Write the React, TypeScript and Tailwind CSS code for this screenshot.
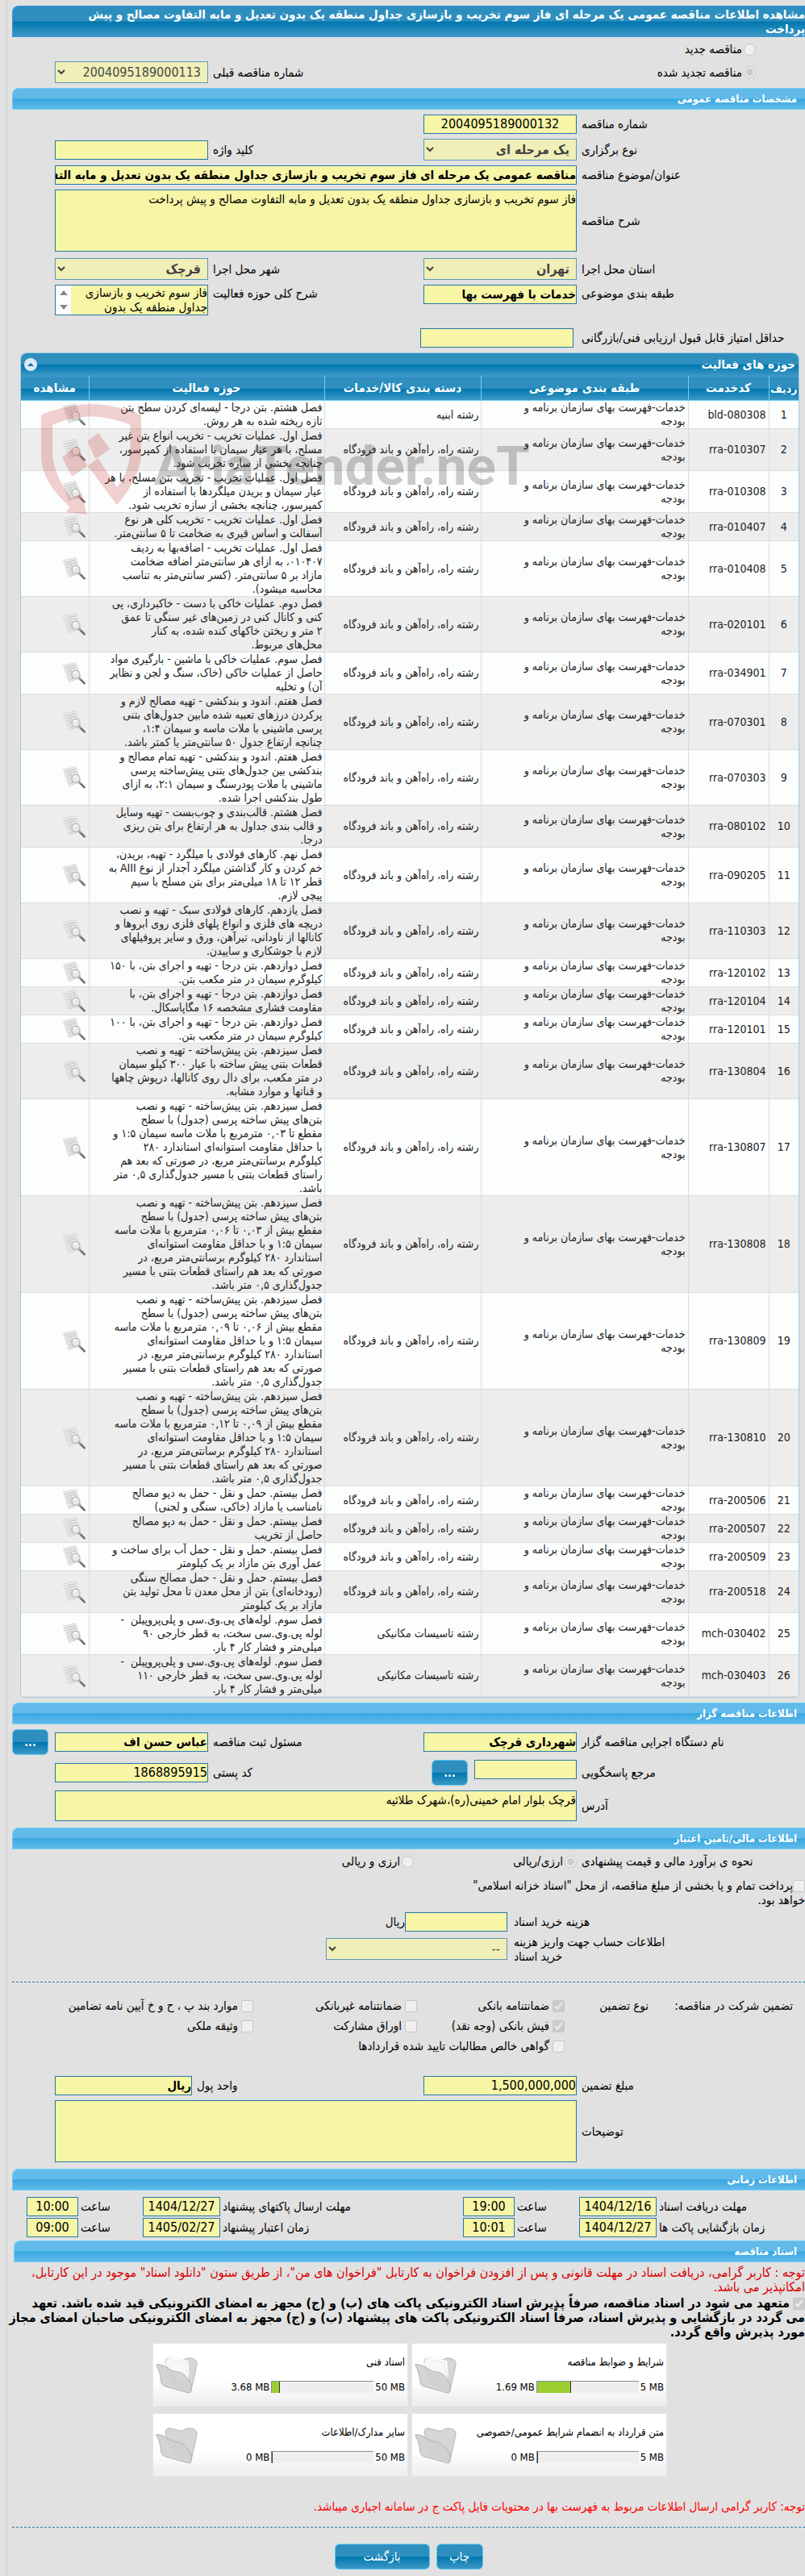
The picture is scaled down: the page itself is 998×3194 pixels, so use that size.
import { type ReactNode } from 'react';
import clsx from 'clsx';

const ROAD = 'رشته راه، راه‌آهن و باند فرودگاه';
const MECH = 'رشته تاسیسات مکانیکی';

type Activity = { code: string; category: string; lines: string[] };

const activities: Activity[] = [
  { code: 'bld-080308', category: 'رشته ابنیه', lines: ['فصل هشتم. بتن درجا - لیسه‌ای کردن سطح بتن', 'تازه ریخته شده به هر روش.'] },
  { code: 'rra-010307', category: ROAD, lines: ['فصل اول. عملیات تخریب - تخریب انواع بتن غیر', 'مسلح، با هر عیار سیمان با استفاده از کمپرسور،', 'چنانچه بخشی از سازه تخریب شود.'] },
  { code: 'rra-010308', category: ROAD, lines: ['فصل اول. عملیات تخریب - تخریب بتن مسلح، با هر', 'عیار سیمان و بریدن میلگردها با استفاده از', 'کمپرسور، چنانچه بخشی از سازه تخریب شود.'] },
  { code: 'rra-010407', category: ROAD, lines: ['فصل اول. عملیات تخریب - تخریب کلی هر نوع', 'آسفالت و اساس قیری به ضخامت تا ۵ سانتی‌متر.'] },
  { code: 'rra-010408', category: ROAD, lines: ['فصل اول. عملیات تخریب - اضافه‌بها به ردیف', '۰۱۰۴۰۷، به ازای هر سانتی‌متر اضافه ضخامت', 'مازاد بر ۵ سانتی‌متر. (کسر سانتی‌متر به تناسب', 'محاسبه میشود).'] },
  { code: 'rra-020101', category: ROAD, lines: ['فصل دوم. عملیات خاکی با دست - خاکبرداری، پی', 'کنی و کانال کنی در زمین‌های غیر سنگی تا عمق', '۲ متر و ریختن خاکهای کنده شده، به کنار', 'محل‌های مربوط.'] },
  { code: 'rra-034901', category: ROAD, lines: ['فصل سوم. عملیات خاکی با ماشین - بارگیری مواد', 'حاصل از عملیات خاکی (خاک، سنگ و لجن و نظایر', 'آن) و تخلیه'] },
  { code: 'rra-070301', category: ROAD, lines: ['فصل هفتم. اندود و بندکشی - تهیه مصالح لازم و', 'پرکردن درزهای تعبیه شده مابین جدول‌های بتنی', 'پرسی ماشینی با ملات ماسه و سیمان ۱:۴،', 'چنانچه ارتفاع جدول ۵۰ سانتی‌متر یا کمتر باشد.'] },
  { code: 'rra-070303', category: ROAD, lines: ['فصل هفتم. اندود و بندکشی - تهیه تمام مصالح و', 'بندکشی بین جدول‌های بتنی پیش‌ساخته پرسی', 'ماشینی با ملات پودرسنگ و سیمان ۲:۱، به ازای', 'طول بندکشی اجرا شده.'] },
  { code: 'rra-080102', category: ROAD, lines: ['فصل هشتم. قالب‌بندی و چوب‌بست - تهیه وسایل', 'و قالب بندی جداول به هر ارتفاع برای بتن ریزی', 'درجا.'] },
  { code: 'rra-090205', category: ROAD, lines: ['فصل نهم. کارهای فولادی با میلگرد - تهیه، بریدن،', 'خم کردن و کار گذاشتن میلگرد آجدار از نوع AIII به', 'قطر ۱۲ تا ۱۸ میلی‌متر برای بتن مسلح با سیم', 'پیچی لازم.'] },
  { code: 'rra-110303', category: ROAD, lines: ['فصل یازدهم. کارهای فولادی سبک - تهیه و نصب', 'دریچه های فلزی و انواع پلهای فلزی روی ابروها و', 'کانالها از ناودانی، تیرآهن، ورق و سایر پروفیلهای', 'لازم با جوشکاری و ساییدن.'] },
  { code: 'rra-120102', category: ROAD, lines: ['فصل دوازدهم. بتن درجا - تهیه و اجرای بتن، با ۱۵۰', 'کیلوگرم سیمان در متر مکعب بتن.'] },
  { code: 'rra-120104', category: ROAD, lines: ['فصل دوازدهم. بتن درجا - تهیه و اجرای بتن، با', 'مقاومت فشاری مشخصه ۱۶ مگاپاسکال.'] },
  { code: 'rra-120101', category: ROAD, lines: ['فصل دوازدهم. بتن درجا - تهیه و اجرای بتن، با ۱۰۰', 'کیلوگرم سیمان در متر مکعب بتن.'] },
  { code: 'rra-130804', category: ROAD, lines: ['فصل سیزدهم. بتن پیش‌ساخته - تهیه و نصب', 'قطعات بتنی پیش ساخته با عیار ۳۰۰ کیلو سیمان', 'در متر مکعب، برای دال روی کانالها، درپوش چاهها', 'و قناتها و موارد مشابه.'] },
  { code: 'rra-130807', category: ROAD, lines: ['فصل سیزدهم. بتن پیش‌ساخته - تهیه و نصب', 'بتن‌های پیش ساخته پرسی (جدول) با سطح', 'مقطع تا ۰,۰۳ مترمربع با ملات ماسه سیمان ۱:۵ و', 'با حداقل مقاومت استوانه‌ای استاندارد ۲۸۰', 'کیلوگرم برسانتی‌متر مربع، در صورتی که بعد هم', 'راستای قطعات بتنی با مسیر جدول‌گذاری ۰,۵ متر', 'باشد.'] },
  { code: 'rra-130808', category: ROAD, lines: ['فصل سیزدهم. بتن پیش‌ساخته - تهیه و نصب', 'بتن‌های پیش ساخته پرسی (جدول) با سطح', 'مقطع بیش از ۰,۰۳ تا ۰,۰۶ مترمربع با ملات ماسه', 'سیمان ۱:۵ و با حداقل مقاومت استوانه‌ای', 'استاندارد ۲۸۰ کیلوگرم برسانتی‌متر مربع، در', 'صورتی که بعد هم راستای قطعات بتنی با مسیر', 'جدول‌گذاری ۰,۵ متر باشد.'] },
  { code: 'rra-130809', category: ROAD, lines: ['فصل سیزدهم. بتن پیش‌ساخته - تهیه و نصب', 'بتن‌های پیش ساخته پرسی (جدول) با سطح', 'مقطع بیش از ۰,۰۶ تا ۰,۰۹ مترمربع با ملات ماسه', 'سیمان ۱:۵ و با حداقل مقاومت استوانه‌ای', 'استاندارد ۲۸۰ کیلوگرم برسانتی‌متر مربع، در', 'صورتی که بعد هم راستای قطعات بتنی با مسیر', 'جدول‌گذاری ۰,۵ متر باشد.'] },
  { code: 'rra-130810', category: ROAD, lines: ['فصل سیزدهم. بتن پیش‌ساخته - تهیه و نصب', 'بتن‌های پیش ساخته پرسی (جدول) با سطح', 'مقطع بیش از ۰,۰۹ تا ۰,۱۲ مترمربع با ملات ماسه', 'سیمان ۱:۵ و با حداقل مقاومت استوانه‌ای', 'استاندارد ۲۸۰ کیلوگرم برسانتی‌متر مربع، در', 'صورتی که بعد هم راستای قطعات بتنی با مسیر', 'جدول‌گذاری ۰,۵ متر باشد.'] },
  { code: 'rra-200506', category: ROAD, lines: ['فصل بیستم. حمل و نقل - حمل به دپو مصالح', 'نامناسب یا مازاد (خاکی، سنگی و لجنی)'] },
  { code: 'rra-200507', category: ROAD, lines: ['فصل بیستم. حمل و نقل - حمل به دپو مصالح', 'حاصل از تخریب'] },
  { code: 'rra-200509', category: ROAD, lines: ['فصل بیستم. حمل و نقل - حمل آب برای ساخت و', 'عمل آوری بتن مازاد بر یک کیلومتر'] },
  { code: 'rra-200518', category: ROAD, lines: ['فصل بیستم. حمل و نقل - حمل مصالح سنگی', '(رودخانه‌ای) بتن از محل معدن تا محل تولید بتن', 'مازاد بر یک کیلومتر'] },
  { code: 'mch-030402', category: MECH, lines: ['فصل سوم. لوله‌های پی.وی.سی و پلی‌پروپیلن  -', 'لوله پی.وی.سی سخت، به قطر خارجی ۹۰', 'میلی‌متر و فشار کار ۴ بار.'] },
  { code: 'mch-030403', category: MECH, lines: ['فصل سوم. لوله‌های پی.وی.سی و پلی‌پروپیلن  -', 'لوله پی.وی.سی سخت، به قطر خارجی ۱۱۰', 'میلی‌متر و فشار کار ۴ بار.'] },
];

const fieldClass = 'block w-full rounded-none border border-[#2478ac] bg-[#f7f5a6] p-0 text-black outline-none';
const darkBar = 'bg-[linear-gradient(to_bottom,#2e8fbf_0%,#2e8fbf_49%,#0077ae_51%,#3d98c6_100%)]';
const rowGrid = 'grid grid-cols-[283fr_190fr_267fr_190fr_53fr]';

function SectionHeader({ children, className }: { children: ReactNode; className?: string }) {
  return (
    <h2
      className={clsx(
        'flex h-[27px] items-center rounded-tl-lg border-y border-l border-[#6fd0f5] bg-[linear-gradient(to_bottom,#62baea_0%,#62baea_46%,#38a7e0_52%,#62baea_100%)] pr-2.5 text-[13px] font-bold text-white',
        className,
      )}
    >
      {children}
    </h2>
  );
}

function Label({ htmlFor, children, className }: { htmlFor: string; children: ReactNode; className?: string }) {
  return (
    <label htmlFor={htmlFor} className={clsx('self-center pl-1.5 text-left whitespace-nowrap', className)}>
      {children}
    </label>
  );
}

type FieldProps = { id: string; value?: string; bold?: boolean; className?: string };

function TextField({ id, value = '', bold = false, className }: FieldProps) {
  return (
    <input
      id={id}
      type="text"
      readOnly
      value={value}
      className={clsx(fieldClass, 'h-6', bold ? 'text-[15px] font-bold' : 'text-base', className)}
    />
  );
}

function SelectField({ id, value, bold = false, className }: FieldProps) {
  return (
    <select id={id} disabled className={clsx(fieldClass, 'h-[27px] px-1 text-base opacity-70', bold && 'font-bold', className)}>
      <option>{value}</option>
    </select>
  );
}

function Check({ id, label, checked = false }: { id: string; label: string; checked?: boolean }) {
  return (
    <div className="flex items-center gap-1">
      <input id={id} type="checkbox" disabled defaultChecked={checked} className="h-[15px] w-[15px] shrink-0" />
      <label htmlFor={id} className="whitespace-nowrap">{label}</label>
    </div>
  );
}

function Radio({ id, name, label, checked = false }: { id: string; name: string; label: string; checked?: boolean }) {
  return (
    <div className="flex items-center gap-0.5">
      <input id={id} name={name} type="radio" disabled defaultChecked={checked} className="h-[15px] w-[15px] shrink-0" />
      <label htmlFor={id} className="whitespace-nowrap">{label}</label>
    </div>
  );
}

function MoreButton() {
  return (
    <button type="button" className={clsx(darkBar, 'h-8 w-[45px] shrink-0 rounded-md border border-[#5fc8f5] text-sm font-bold text-white')}>
      ...
    </button>
  );
}

function PreviewIcon() {
  return (
    <svg viewBox="0 0 84 84" className="block h-7 w-7" aria-hidden="true">
      <path d="M2 12 48 2 66 58 22 74Z" fill="#ececec" stroke="#c9c9c9" strokeWidth="2" />
      <path d="M9 20 46 11M12 29 49 20M15 38 38 32M18 47 36 42M21 56 38 51M24 65 42 59" stroke="#bdbdbd" strokeWidth="3" />
      <path d="M25 12 38 68M40 8 48 32" stroke="#d4d4d4" strokeWidth="4" />
      <circle cx="48" cy="46" r="15" fill="#e9e9e9" fillOpacity="0.9" stroke="#ababab" strokeWidth="3" />
      <path d="M40 42Q43 36 51 36" stroke="#fff" strokeWidth="4" fill="none" />
      <path d="M61 60 80 79" stroke="#707070" strokeWidth="8" strokeLinecap="round" />
      <path d="M58 56 66 64" stroke="#b5b5b5" strokeWidth="6" />
    </svg>
  );
}

function Watermark() {
  return (
    <svg viewBox="75 21 1920 600" className="pointer-events-none absolute top-0 left-0 h-[200px] w-[640px]" aria-hidden="true">
      <g fill="#c62828" fillOpacity="0.22">
        <path d="M150 250Q240 212 335 210Q430 212 522 250V400Q515 490 432 585L323 440L362 412L432 520Q478 460 482 390V288Q410 258 335 256Q260 258 192 288V400Q200 480 264 562L300 540L320 620L242 612L256 592Q150 500 150 400Z" />
        <path d="M228 408 284 364 322 440 265 480Z" />
        <path d="M322 348 362 318 407 378 352 414Z" />
      </g>
      <text
        direction="ltr"
        x="570"
        y="510"
        fontFamily="Roboto, sans-serif"
        fontWeight="700"
        fontSize="202"
        fill="#000"
        fillOpacity="0.2"
      >
        AriaTender.neT
      </text>
    </svg>
  );
}

function ActivityTable() {
  return (
    <section className="relative mt-1.5 mr-[7px] ml-2.5 overflow-hidden rounded-t-lg rounded-b-md border border-[#a3c9e4] bg-[#fcfefe]">
      <div className={clsx(darkBar, 'flex h-7 items-center justify-between px-1 text-[15px] font-bold text-white')}>
        <h3>حوزه های فعالیت</h3>
        <button type="button" aria-label="بستن" className="flex h-4 w-4 items-center justify-center rounded-full bg-[#dbe8f8]">
          <svg viewBox="0 0 8 4" className="h-1 w-2"><path d="M0 4 4 0 8 4Z" fill="#0d6ea6" /></svg>
        </button>
      </div>
      <table className="w-full table-fixed border-collapse text-sm leading-[17px] text-[#222]">
        <colgroup>
          <col className="w-[37px]" />
          <col className="w-[100px]" />
          <col className="w-[257px]" />
          <col className="w-[194px]" />
          <col />
          <col className="w-[84px]" />
        </colgroup>
        <thead>
          <tr className={clsx(darkBar, 'h-[30px] border-t border-b border-t-[#3b93d8] border-b-[#6fd0f5] text-[15px] text-white')}>
            <th className="border-l border-[#6fd0f5] p-0 text-sm whitespace-nowrap">ردیف</th>
            <th className="border-l border-[#6fd0f5]">کدخدمت</th>
            <th className="border-l border-[#6fd0f5]">طبقه بندی موضوعی</th>
            <th className="border-l border-[#6fd0f5]">دسته بندی کالا/خدمات</th>
            <th className="border-l border-[#6fd0f5]">حوزه فعالیت</th>
            <th>مشاهده</th>
          </tr>
        </thead>
        <tbody>
          {activities.map((a, i) => (
            <tr key={a.code} className="border-b border-[#dcdcdc] odd:bg-[#fcfefe] even:bg-[#ededed]">
              <td className="border-l border-[#dcdcdc] p-0 text-center">{i + 1}</td>
              <td className="border-l border-[#dcdcdc] p-0 pr-[3px]"><bdi>{a.code}</bdi></td>
              <td className="border-l border-[#dcdcdc] p-0 pr-[3px] whitespace-pre">{'خدمات-فهرست بهای سازمان برنامه و\nبودجه'}</td>
              <td className="border-l border-[#dcdcdc] p-0 pr-0.5 whitespace-nowrap">{a.category}</td>
              <td className="border-l border-[#dcdcdc] p-0 pr-0.5 whitespace-pre">{a.lines.join('\n')}</td>
              <td className="p-0 pr-1"><PreviewIcon /></td>
            </tr>
          ))}
        </tbody>
      </table>
      <Watermark />
    </section>
  );
}

function FolderIcon({ filled }: { filled: boolean }) {
  return (
    <svg viewBox="0 0 160 140" className="h-[47px] w-[53px] shrink-0" aria-hidden="true">
      <path d="M36 20Q38 4 50 4L92 14Q102 16 110 8Q120 2 138 6Q156 12 154 30L132 128 60 100Z" fill="#d6d6d6" stroke="#b5b5b5" strokeWidth="3" />
      {filled && (
        <>
          <path d="M36 18 50 0 122 14 126 70 90 84Z" fill="#fff" stroke="#e2e2e2" strokeWidth="2" />
          <path d="M34 28 44 8 112 20 124 84 90 84Z" fill="#f7f7f7" stroke="#dcdcdc" strokeWidth="2" />
        </>
      )}
      <path d="M2 30Q6 26 12 28Q34 32 50 46Q66 56 92 58Q112 64 134 104L132 130Q130 138 120 134L34 110Q22 106 20 92Q18 56 2 30Z" fill="#d0d0d0" fillOpacity="0.92" stroke="#b0b0b0" strokeWidth="3" />
    </svg>
  );
}

type Doc = { title: string; total: number; used: number };

const docs: Doc[] = [
  { title: 'شرایط و ضوابط مناقصه', total: 5, used: 1.69 },
  { title: 'اسناد فنی', total: 50, used: 3.68 },
  { title: 'متن قرارداد به انضمام شرایط عمومی/خصوصی', total: 5, used: 0 },
  { title: 'سایر مدارک/اطلاعات', total: 50, used: 0 },
];

function DocCard({ doc }: { doc: Doc }) {
  return (
    <div className="relative flex h-[79px] items-start border border-[#e6e6e6] bg-linear-to-b from-white from-60% to-[#ededed] px-[3px] text-[13px]">
      <div className="min-w-0 flex-1">
        <div className="mt-3.5 h-[17px] leading-[17px] whitespace-nowrap">{doc.title}</div>
        <div className="mt-[15px] flex h-[15px] items-center gap-0.5">
          <bdi className="whitespace-nowrap" dir="ltr">{doc.total} MB</bdi>
          <div dir="ltr" className="h-[15px] w-[127px] border-t border-l border-[#8d8d8d] bg-[#eee]">
            <div className="h-full border-r border-[#333] bg-[#9acd32]" style={{ width: `${(doc.used / doc.total) * 100}%` }} />
          </div>
          <bdi className="whitespace-nowrap" dir="ltr">{doc.used} MB</bdi>
        </div>
      </div>
      <div className="absolute top-4 left-[3px]">
        <FolderIcon filled={doc.used > 0} />
      </div>
    </div>
  );
}

type TimePair = { id: string; label: string; date: string; time: string };

const deadlines: TimePair[][] = [
  [
    { id: 'docs-due', label: 'مهلت دریافت اسناد', date: '1404/12/16', time: '19:00' },
    { id: 'offer-due', label: 'مهلت ارسال پاکتهای پیشنهاد', date: '1404/12/27', time: '10:00' },
  ],
  [
    { id: 'opening', label: 'زمان بازگشایی پاکت ها', date: '1404/12/27', time: '10:01' },
    { id: 'validity', label: 'زمان اعتبار پیشنهاد', date: '1405/02/27', time: '09:00' },
  ],
];

export default function App() {
  return (
    <div dir="rtl" lang="fa" className="min-h-screen bg-[#e1e1e1] pl-2 font-['DejaVu_Sans_Condensed','DejaVu_Sans',sans-serif] text-[15px] leading-[18px] text-black">
      <main className="border-l border-dotted border-[#bbb] pt-[7px] pb-[7px] pl-1.5">
        <h1 className={clsx(darkBar, 'rounded-tl-lg border-y border-l border-[#3b93d8] pt-px pl-10 font-bold text-white')}>
          مشاهده اطلاعات مناقصه عمومی یک مرحله ای فاز سوم تخریب و بازسازی جداول منطقه یک بدون تعدیل و مابه التفاوت مصالح و پیش پرداخت
        </h1>
        <div className="flex h-[30px] items-center pr-[61px]">
          <Radio id="kind-new" name="kind" label="مناقصه جدید" />
        </div>
        <div className={clsx(rowGrid, 'items-center')}>
          <div className="col-span-2 pr-[61px]">
            <Radio id="kind-renewed" name="kind" label="مناقصه تجدید شده" checked />
          </div>
          <Label htmlFor="prev-no">شماره مناقصه قبلی</Label>
          <SelectField id="prev-no" value="2004095189000113" />
        </div>

        <SectionHeader className="mt-1.5">مشخصات مناقصه عمومی</SectionHeader>
        <div className={clsx(rowGrid, 'mt-1.5')}>
          <Label htmlFor="tender-no">شماره مناقصه</Label>
          <TextField id="tender-no" value="2004095189000132" className="text-center" />
        </div>
        <div className={clsx(rowGrid, 'mt-1.5')}>
          <Label htmlFor="type">نوع برگزاری</Label>
          <SelectField id="type" value="یک مرحله ای" bold />
          <Label htmlFor="keyword">کلید واژه</Label>
          <TextField id="keyword" className="self-center" />
        </div>
        <div className={clsx(rowGrid, 'mt-1.5')}>
          <Label htmlFor="subject">عنوان/موضوع مناقصه</Label>
          <TextField
            id="subject"
            value="مناقصه عمومی یک مرحله ای فاز سوم تخریب و بازسازی جداول منطقه یک بدون تعدیل و مابه التفاوت مصالح و پیش پرداخت"
            bold
            className="col-span-3"
          />
        </div>
        <div className={clsx(rowGrid, 'mt-1.5')}>
          <Label htmlFor="desc">شرح مناقصه</Label>
          <textarea
            id="desc"
            readOnly
            className={clsx(fieldClass, 'col-span-3 h-[77px] resize-none pt-0.5')}
            value="فاز سوم تخریب و بازسازی جداول منطقه یک بدون تعدیل و مابه التفاوت مصالح و پیش پرداخت"
          />
        </div>
        <div className={clsx(rowGrid, 'mt-2')}>
          <Label htmlFor="province">استان محل اجرا</Label>
          <SelectField id="province" value="تهران" bold />
          <Label htmlFor="city">شهر محل اجرا</Label>
          <SelectField id="city" value="قرچک" bold />
        </div>
        <div className={clsx(rowGrid, 'mt-1.5 items-start')}>
          <Label htmlFor="class" className="self-start pt-0.5">طبقه بندی موضوعی</Label>
          <TextField id="class" value="خدمات با فهرست بها" bold />
          <Label htmlFor="scope" className="self-start pt-0.5">شرح کلی حوزه فعالیت</Label>
          <div className="flex h-[38px] border border-[#2478ac] bg-[#f7f5a6]">
            <textarea
              id="scope"
              readOnly
              className="h-full min-w-0 flex-1 resize-none overflow-hidden bg-transparent p-0 outline-none"
              value={'فاز سوم تخریب و بازسازی\nجداول منطقه یک بدون'}
            />
            <div className="flex w-[19px] shrink-0 flex-col items-center justify-around bg-[#fcfcfc]" aria-hidden="true">
              <svg viewBox="0 0 10 6" className="h-1.5 w-2.5"><path d="M0 6 5 0 10 6Z" fill="#8a8a8a" /></svg>
              <svg viewBox="0 0 10 6" className="h-1.5 w-2.5"><path d="M0 0 5 6 10 0Z" fill="#8a8a8a" /></svg>
            </div>
          </div>
        </div>
        <div className={clsx(rowGrid, 'mt-4')}>
          <Label htmlFor="min-score">حداقل امتیاز قابل قبول ارزیابی فنی/بازرگانی</Label>
          <div className="mr-1 -ml-1">
            <TextField id="min-score" />
          </div>
        </div>

        <ActivityTable />

        <SectionHeader className="mt-1.5">اطلاعات مناقصه گزار</SectionHeader>
        <div className={clsx(rowGrid, 'mt-1.5 items-center')}>
          <Label htmlFor="org">نام دستگاه اجرایی مناقصه گزار</Label>
          <TextField id="org" value="شهرداری قرچک" bold />
          <Label htmlFor="officer">مسئول ثبت مناقصه</Label>
          <TextField id="officer" value="عباس حسن اف" bold />
          <div className="flex justify-end"><MoreButton /></div>
        </div>
        <div className={clsx(rowGrid, 'mt-1.5')}>
          <Label htmlFor="contact">مرجع پاسخگویی</Label>
          <div className="flex items-start gap-2">
            <TextField id="contact" className="max-w-[127px]" />
            <MoreButton />
          </div>
          <Label htmlFor="zip">کد پستی</Label>
          <TextField id="zip" value="1868895915" className="self-center" />
        </div>
        <div className={clsx(rowGrid, 'mt-1.5')}>
          <Label htmlFor="address">آدرس</Label>
          <textarea
            id="address"
            readOnly
            className={clsx(fieldClass, 'col-span-3 h-[38px] resize-none pt-0.5')}
            value="قرچک بلوار امام خمینی(ره)،شهرک طلائیه"
          />
        </div>

        <SectionHeader className="mt-2">اطلاعات مالی/تامین اعتبار</SectionHeader>
        <div className={clsx(rowGrid, 'mt-1.5')}>
          <div className="pl-1.5 text-left">نحوه ی برآورد مالی و قیمت پیشنهادی</div>
          <div className="col-span-2 flex">
            <div className="w-[202px]"><Radio id="cur-single" name="currency" label="ارزی/ریالی" checked /></div>
            <Radio id="cur-both" name="currency" label="ارزی و ریالی" />
          </div>
        </div>
        <div className="mt-3">
          <input id="treasury" type="checkbox" disabled className="h-[15px] w-[15px] align-middle" />
          <label htmlFor="treasury">
            پرداخت تمام و یا بخشی از مبلغ مناقصه، از محل &quot;اسناد خزانه اسلامی&quot;
            <br />
            خواهد بود.
          </label>
        </div>
        <div className="mt-1.5 grid grid-cols-[369fr_614fr]">
          <Label htmlFor="fee" className="pl-2">هزینه خرید اسناد</Label>
          <div className="flex items-center">
            <TextField id="fee" className="max-w-[127px]" />
            <span>ریال</span>
          </div>
        </div>
        <div className="mt-1 grid grid-cols-[369fr_614fr]">
          <Label htmlFor="account" className="pl-2">
            اطلاعات حساب جهت واریز هزینه
            <br />
            خرید اسناد
          </Label>
          <SelectField id="account" value="--" className="mt-1 max-w-[225px]" />
        </div>
        <hr className="mt-[22px] border-t border-dashed border-[#2478ac]" />

        <div className="mt-5 grid grid-cols-[155px_128px_183px_203px_1fr] gap-y-[7px] pr-[15px]">
          <div className="whitespace-nowrap">تضمین شرکت در مناقصه:</div>
          <div className="pr-6 whitespace-nowrap">نوع تضمین</div>
          <Check id="g-bank" label="ضمانتنامه بانکی" checked />
          <Check id="g-nonbank" label="ضمانتنامه غیربانکی" />
          <Check id="g-clauses" label="موارد بند پ ، ح و خ آیین نامه تضامین" />
          <div className="col-span-2" />
          <Check id="g-cash" label="فیش بانکی (وجه نقد)" checked />
          <Check id="g-bonds" label="اوراق مشارکت" />
          <Check id="g-property" label="وثیقه ملکی" />
          <div className="col-span-2" />
          <div className="col-span-3">
            <Check id="g-claims" label="گواهی خالص مطالبات تایید شده قراردادها" />
          </div>
        </div>
        <div className={clsx(rowGrid, 'mt-7')}>
          <Label htmlFor="amount">مبلغ تضمین</Label>
          <TextField id="amount" value="1,500,000,000" />
          <div className="col-span-2 flex items-center justify-end">
            <Label htmlFor="unit">واحد پول</Label>
            <TextField id="unit" value="ریال" bold className="max-w-[170px]" />
          </div>
        </div>
        <div className={clsx(rowGrid, 'mt-1.5')}>
          <Label htmlFor="notes">توضیحات</Label>
          <textarea id="notes" readOnly className={clsx(fieldClass, 'col-span-3 h-[77px] resize-none')} value="" />
        </div>

        <SectionHeader className="mt-2">اطلاعات زمانی</SectionHeader>
        <div className="mt-2 space-y-0.5">
          {deadlines.map((row) => (
            <div key={row[0].id} className="grid grid-cols-[184fr_96fr_80fr_64fr_301fr_96fr_80fr_64fr_18fr]">
              {row.map((d) => (
                <div key={d.id} className="contents">
                  <Label htmlFor={`${d.id}-date`} className="pl-[3px]">{d.label}</Label>
                  <TextField id={`${d.id}-date`} value={d.date} className="text-center" />
                  <Label htmlFor={`${d.id}-time`} className="pl-[3px]">ساعت</Label>
                  <TextField id={`${d.id}-time`} value={d.time} className="text-center" />
                </div>
              ))}
            </div>
          ))}
        </div>

        <SectionHeader className="mt-1 ml-0.5">اسناد مناقصه</SectionHeader>
        <p className="mt-1 text-base leading-[18px] text-[#d90000]">
          توجه : کاربر گرامی، دریافت اسناد در مهلت قانونی و پس از افزودن فراخوان به کارتابل &quot;فراخوان های من&quot;، از طریق ستون &quot;دانلود اسناد&quot; موجود در این کارتابل، امکانپذیر می باشد.
        </p>
        <div className="mt-0.5 -ml-1.5 text-base leading-[18px] font-bold">
          <input id="pledge" type="checkbox" disabled defaultChecked className="ml-1 h-[15px] w-[15px] align-middle" />
          <label htmlFor="pledge">
            متعهد می شود در اسناد مناقصه، صرفاً پذیرش اسناد الکترونیکی پاکت های (ب) و (ج) مجهز به امضای الکترونیکی قید شده باشد. تعهد
            <br />
            <span className="whitespace-nowrap">
              می گردد در بازگشایی و پذیرش اسناد، صرفاً اسناد الکترونیکی پاکت های پیشنهاد (ب) و (ج) مجهز به امضای الکترونیکی صاحبان امضای مجاز
            </span>
            <br />
            مورد پذیرش واقع گردد.
          </label>
        </div>
        <div className="mt-1 mr-[171px] ml-[174px] grid grid-cols-2 gap-x-1 gap-y-2">
          {docs.map((d) => <DocCard key={d.title} doc={d} />)}
        </div>
        <p className="mt-7 text-[#f00]">
          توجه: کاربر گرامی ارسال اطلاعات مربوط به فهرست بها در محتویات فایل پاکت ج در سامانه اجباری میباشد.
        </p>
        <hr className="mt-4 border-t border-dashed border-[#2478ac]" />
        <div className="mt-5 flex justify-center gap-2">
          <button type="button" className={clsx(darkBar, 'h-8 w-[58px] rounded-md border border-[#5fc8f5] text-white')}>چاپ</button>
          <button type="button" className={clsx(darkBar, 'h-8 w-[118px] rounded-md border border-[#5fc8f5] text-white')}>بازگشت</button>
        </div>
      </main>
    </div>
  );
}
